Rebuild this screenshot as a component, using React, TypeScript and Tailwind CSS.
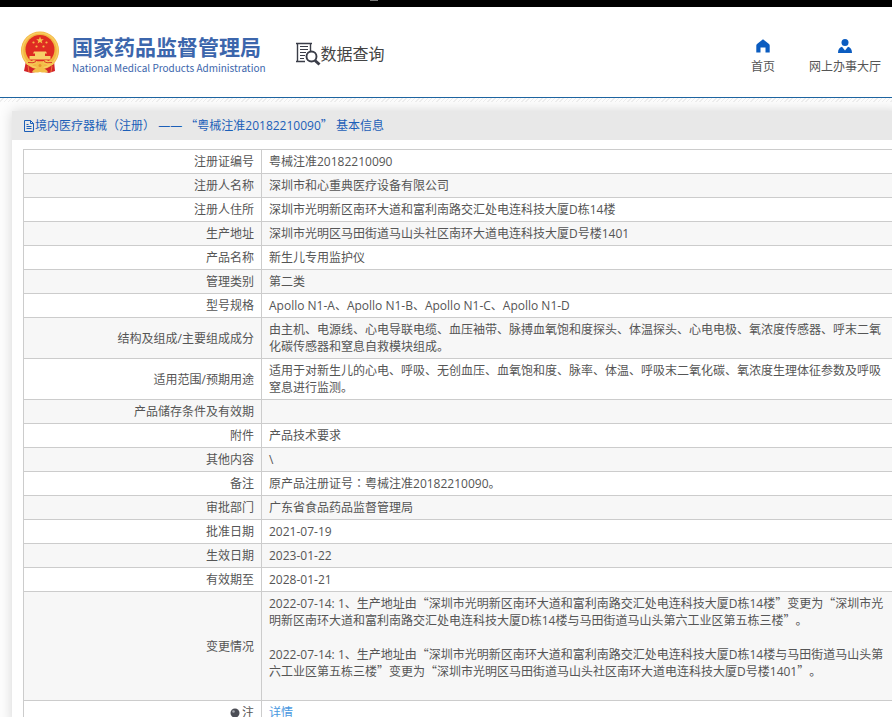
import { Fragment } from 'react'

interface Row {
  label: string
  lines: string[]
}

const rows: Row[] = [
  { label: '注册证编号', lines: ['粤械注准20182210090'] },
  { label: '注册人名称', lines: ['深圳市和心重典医疗设备有限公司'] },
  { label: '注册人住所', lines: ['深圳市光明新区南环大道和富利南路交汇处电连科技大厦D栋14楼'] },
  { label: '生产地址', lines: ['深圳市光明区马田街道马山头社区南环大道电连科技大厦D号楼1401'] },
  { label: '产品名称', lines: ['新生儿专用监护仪'] },
  { label: '管理类别', lines: ['第二类'] },
  { label: '型号规格', lines: ['Apollo N1-A、Apollo N1-B、Apollo N1-C、Apollo N1-D'] },
  {
    label: '结构及组成/主要组成成分',
    lines: [
      '由主机、电源线、心电导联电缆、血压袖带、脉搏血氧饱和度探头、体温探头、心电电极、氧浓度传感器、呼末二氧化碳传感器和窒息自救模块组成。',
    ],
  },
  {
    label: '适用范围/预期用途',
    lines: [
      '适用于对新生儿的心电、呼吸、无创血压、血氧饱和度、脉率、体温、呼吸末二氧化碳、氧浓度生理体征参数及呼吸窒息进行监测。',
    ],
  },
  { label: '产品储存条件及有效期', lines: [''] },
  { label: '附件', lines: ['产品技术要求'] },
  { label: '其他内容', lines: ['\\'] },
  { label: '备注', lines: ['原产品注册证号：粤械注准20182210090。'] },
  { label: '审批部门', lines: ['广东省食品药品监督管理局'] },
  { label: '批准日期', lines: ['2021-07-19'] },
  { label: '生效日期', lines: ['2023-01-22'] },
  { label: '有效期至', lines: ['2028-01-21'] },
  {
    label: '变更情况',
    lines: [
      '2022-07-14: 1、生产地址由“深圳市光明新区南环大道和富利南路交汇处电连科技大厦D栋14楼”变更为“深圳市光明新区南环大道和富利南路交汇处电连科技大厦D栋14楼与马田街道马山头第六工业区第五栋三楼”。',
      '',
      '2022-07-14: 1、生产地址由“深圳市光明新区南环大道和富利南路交汇处电连科技大厦D栋14楼与马田街道马山头第六工业区第五栋三楼”变更为“深圳市光明区马田街道马山头社区南环大道电连科技大厦D号楼1401”。',
      '',
    ],
  },
]

// Quotes, brackets and colons need the full-width glyphs of a Chinese font
function Zh({ text }: { text: string }) {
  return (
    <>
      {text.split(/([“”]|[（）：])/).map((part, i) => {
        if (i % 2 === 0) return <Fragment key={i}>{part}</Fragment>
        return /[“”]/.test(part) ? (
          <span key={i} className="font-['Noto_Sans_CJK_SC',sans-serif] leading-none">
            {part}
          </span>
        ) : (
          <span key={i} lang="zh-TW" className="font-['Noto_Sans_CJK_TC',sans-serif] leading-none">
            {part}
          </span>
        )
      })}
    </>
  )
}

function Emblem() {
  return (
    <svg viewBox="0 0 40 43" className="h-[43px] w-10" aria-hidden="true">
      <path d="M6 30 L4 40 L11 42 L20 40 L29 42 L35 40 L34 30 Z" fill="#d3232a" />
      <ellipse cx="20" cy="19.500" rx="19" ry="19" fill="#f2b640" />
      <ellipse cx="20" cy="19.500" rx="17.500" ry="17.500" fill="none" stroke="#f8cc62" strokeWidth="1.500" />
      <ellipse cx="20" cy="18.500" rx="14.500" ry="14.500" fill="#df2b22" />
      <path
        d="M20 5.500l1 2.700h2.800l-2.200 1.700.8 2.700-2.400-1.600-2.400 1.600.8-2.700-2.200-1.700H19z"
        fill="#f6c34b"
      />
      <circle cx="13.500" cy="11.500" r="1.100" fill="#f6b848" />
      <circle cx="26.500" cy="11.500" r="1.100" fill="#f6b848" />
      <circle cx="16.500" cy="15.500" r="1.100" fill="#f6b848" />
      <circle cx="23.500" cy="15.500" r="1.100" fill="#f6b848" />
      <path d="M14 20.500h12l1 2H13zM15 22.500h10v2.500H15zM9.500 25h21v3.500h-21z" fill="#f8d068" />
      <path d="M5 30q5 1 9-1 6 3 12 0 4 2 9 1l-2 4q-5 1-8-1l-5 2-5-2q-3 2-8 1z" fill="#f6c655" />
      <path d="M8 31.500q6 1 8-1M32 31.500q-6 1-8-1" fill="none" stroke="#d93a24" />
      <circle cx="20" cy="34.500" r="4" fill="#f3bd48" />
      <circle cx="20" cy="34.500" r="1.500" fill="#e8902f" />
      <path d="M12 41q2-4 8-4t8 4q-4 1-8 0-4 1-8 0z" fill="#f3bd48" />
      <path d="M8 35l1 6M32 35l-1 6" stroke="#ee7a3a" />
    </svg>
  )
}

function SearchDocIcon() {
  return (
    <svg viewBox="0 0 25 24" className="h-6 w-[25px]" fill="none" stroke="#3a3d48" aria-hidden="true">
      <path d="M0 1.500h16M1.500 1v19M0 19.500h9M14.500 1v8" strokeWidth="1.400" />
      <path d="M4 4.500h8M4 7.500h8M4 10.500h6M4 13.500h5M4 16.500h4" strokeWidth="1.200" />
      <circle cx="15.500" cy="14.500" r="5" strokeWidth="1.900" fill="#fff" />
      <path d="M19 18.500l4.500 4" strokeWidth="3" />
    </svg>
  )
}

function HomeIcon() {
  return (
    <svg viewBox="0 0 14 14" className="h-3.5 w-3.5" fill="#0b5cc0" aria-hidden="true">
      <path d="M7 .3 1 5Q.3 5.500.3 6.500V13.500h4.200V8.500h5v5h4.200v-7q0-1-.7-1.500z" />
    </svg>
  )
}

function UserIcon() {
  return (
    <svg viewBox="0 0 14 14" className="h-3.5 w-3.5" fill="#0b5cc0" aria-hidden="true">
      <circle cx="7" cy="3.500" r="3.500" />
      <path d="M0 14c0-3.500 1.500-5.500 4-6.200L7 11.500l3-3.700c2.500.7 4 2.700 4 6.200z" />
    </svg>
  )
}

function FileIcon() {
  return (
    <svg viewBox="0 0 11 12" className="h-3 w-[11px]" fill="none" stroke="#1c5fb8" aria-hidden="true">
      <path d="M.500.500h6l3 3v8h-9zM6.500.500v3h3M2.500 6.500h5M2.500 8.500h5M2.500 4.500h2" />
    </svg>
  )
}

function NoteIcon() {
  return (
    <svg viewBox="0 0 10 10" className="mr-0.5 inline-block h-2.5 w-2.5" aria-hidden="true">
      <circle cx="5" cy="5" r="4.500" fill="#4b4d55" />
      <circle cx="3.500" cy="3.500" r="1.300" fill="#a3a5ab" />
    </svg>
  )
}

export default function App() {
  return (
    <div className="h-screen overflow-hidden bg-[#fdfdfd] font-['Open_Sans','Noto_Sans_CJK_SC',sans-serif] text-xs leading-[17px] text-[#555] [text-spacing-trim:space-all]">
      <div className="h-[7px] bg-black">
        <div className="ml-[41.5%] h-px w-2 bg-[#777]" />
      </div>

      <header className="flex h-[91px] items-center border-b border-[#1d64a0] bg-white pr-[11px] pl-5">
        <a href="#" className="flex items-center gap-3">
          <Emblem />
          <span className="flex flex-col pt-2 font-['Noto_Sans_CJK_SC',sans-serif] text-[#3c66ac]">
            <span className="text-[21px] leading-6 font-bold">国家药品监督管理局</span>
            <span className="text-[10px] leading-5">National Medical Products Administration</span>
          </span>
        </a>
        <h1 className="ml-[30px] flex items-center pt-1 text-base leading-6 text-[#444]">
          <SearchDocIcon />
          数据查询
        </h1>
        <nav className="ml-auto flex gap-[34px] pt-2.5">
          <a href="#" className="flex flex-col items-center gap-[5px]">
            <HomeIcon />
            首页
          </a>
          <a href="#" className="flex flex-col items-center gap-[5px]">
            <UserIcon />
            网上办事大厅
          </a>
        </nav>
      </header>

      <div className="h-1 bg-[repeating-linear-gradient(135deg,#fdfdfd_0,#fdfdfd_2px,#eee_2px,#eee_3px)]" />

      <main className="mt-[9px] -mr-2 ml-3 bg-white shadow-[0_0_12px_rgba(0,0,0,0.16)]">
        <h2 className="mb-[9px] flex h-[29px] items-center bg-[#e8e8e8] pl-3 text-[#1c5fb8]">
          <FileIcon />
          <span>
            <Zh text="境内医疗器械（注册） —— “粤械注准20182210090” 基本信息" />
          </span>
        </h2>

        <div className="pl-[11px]">
          <table className="w-full border-collapse">
            <tbody>
              {rows.map((row) => (
                <tr key={row.label} className="even:bg-[#f7f7f7]">
                  <th
                    scope="row"
                    className="w-[238px] border border-[#ccc] px-[7px] py-[3px] text-right font-normal"
                  >
                    {row.label}
                  </th>
                  <td className="border border-[#ccc] px-[7px] py-[3px]">
                    {row.lines.map((line, i) => (
                      <p key={i} className="min-h-[17px]">
                        <Zh text={line} />
                      </p>
                    ))}
                  </td>
                </tr>
              ))}
              <tr>
                <th scope="row" className="border border-[#ccc] px-[7px] py-[3px] text-right font-normal">
                  <span className="flex items-center justify-end">
                    <NoteIcon />注
                  </span>
                </th>
                <td className="border border-[#ccc] px-[7px] py-[3px]">
                  <a href="#" className="text-[#4a98e0]">
                    详情
                  </a>
                </td>
              </tr>
            </tbody>
          </table>
        </div>
      </main>
    </div>
  )
}
